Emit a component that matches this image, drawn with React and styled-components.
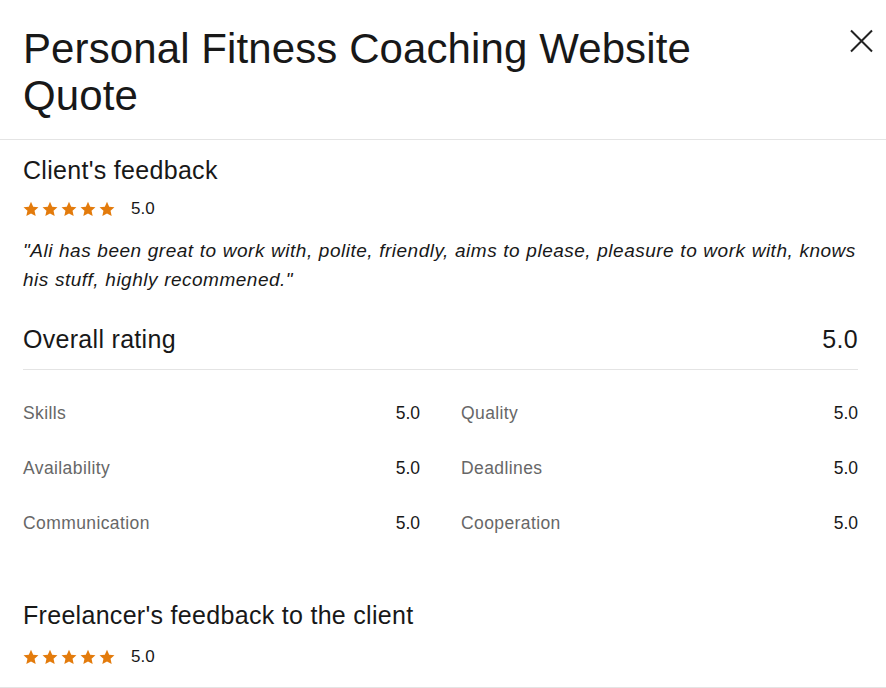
import React from "react";
import styled, { createGlobalStyle } from "styled-components";

const GlobalStyle = createGlobalStyle`
  html, body {
    margin: 0;
    padding: 0;
    background: #fff;
  }
  body {
    font-family: "Liberation Sans", Arial, sans-serif;
    color: #181818;
  }
`;

const Modal = styled.div`
  width: 886px;
  background: #fff;
`;

const Header = styled.div`
  display: flex;
  justify-content: space-between;
  align-items: flex-start;
  padding: 25px 12px 20px 23px;
  border-bottom: 1px solid #e4e4e4;
`;

const Title = styled.h1`
  margin: 0;
  max-width: 720px;
  font-size: 42px;
  line-height: 47px;
  font-weight: 400;
  letter-spacing: 0.1px;
`;

const CloseButton = styled.button`
  width: 26px;
  height: 26px;
  margin-top: 3px;
  padding: 0;
  border: none;
  background: none;
  cursor: pointer;
  display: flex;
  align-items: center;
  justify-content: center;
`;

const Body = styled.div`
  padding: 15px 28px 0 23px;
`;

const Heading = styled.h2`
  margin: 0;
  font-size: 25px;
  line-height: 30px;
  font-weight: 400;
  letter-spacing: 0.3px;
`;

const StarRow = styled.div`
  display: flex;
  align-items: center;
  height: 20px;
  margin-top: ${p => p.$gap || 14}px;
`;

const Stars = styled.div`
  display: flex;
  gap: 3px;
  margin-right: 16px;
`;

const Score = styled.span`
  font-size: 17px;
  line-height: 20px;
`;

const Quote = styled.p`
  margin: 17px 0 0;
  font-size: 19px;
  line-height: 29px;
  font-style: italic;
  letter-spacing: 0.5px;
  word-spacing: 0.4px;
`;

const OverallRow = styled.div`
  display: flex;
  justify-content: space-between;
  align-items: center;
  margin-top: 30px;
  padding-bottom: 15px;
  border-bottom: 1px solid #e4e4e4;
`;

const Grid = styled.div`
  display: grid;
  grid-template-columns: 1fr 1fr;
  column-gap: 41px;
  row-gap: 31px;
  margin-top: 31px;
`;

const MetricRow = styled.div`
  display: flex;
  justify-content: space-between;
  font-size: 17.5px;
  line-height: 24px;
`;

const MetricLabel = styled.span`
  color: #676767;
  letter-spacing: 0.4px;
`;

const MetricValue = styled.span`
  color: #181818;
`;

const FreelancerBlock = styled.div`
  margin: 65px -28px 0 -23px;
  padding: 0 0 20px 23px;
  border-bottom: 1px solid #e4e4e4;
`;

const Star = () => (
  <svg width="16" height="16" viewBox="0 0 24 24">
    <path
      fill="#e37b0c"
      d="M12 1.2l3.3 7.3 7.9.8-5.9 5.4 1.7 7.9L12 18.6l-7 4 1.7-7.9L.8 9.3l7.9-.8z"
    />
  </svg>
);

const Rating = ({ value, gap }) => (
  <StarRow $gap={gap}>
    <Stars>
      {[0, 1, 2, 3, 4].map(i => (
        <Star key={i} />
      ))}
    </Stars>
    <Score>{value}</Score>
  </StarRow>
);

const metrics = [
  ["Skills", "5.0"],
  ["Quality", "5.0"],
  ["Availability", "5.0"],
  ["Deadlines", "5.0"],
  ["Communication", "5.0"],
  ["Cooperation", "5.0"],
];

export default function App() {
  return (
    <Modal>
      <GlobalStyle />
      <Header>
        <Title>Personal Fitness Coaching Website Quote</Title>
        <CloseButton aria-label="Close">
          <svg width="24" height="24" viewBox="0 0 24 24">
            <path d="M2 1.5l21 21M23 1.5l-21 21" stroke="#222" strokeWidth="2" fill="none" />
          </svg>
        </CloseButton>
      </Header>
      <Body>
        <section>
          <Heading>Client's feedback</Heading>
          <Rating value="5.0" />
          <Quote>
            "Ali has been great to work with, polite, friendly, aims to please, pleasure to work
            with, knows his stuff, highly recommened."
          </Quote>
        </section>
        <OverallRow>
          <Heading>Overall rating</Heading>
          <Heading>5.0</Heading>
        </OverallRow>
        <Grid>
          {metrics.map(([label, value]) => (
            <MetricRow key={label}>
              <MetricLabel>{label}</MetricLabel>
              <MetricValue>{value}</MetricValue>
            </MetricRow>
          ))}
        </Grid>
        <FreelancerBlock>
          <Heading>Freelancer's feedback to the client</Heading>
          <Rating value="5.0" gap={17} />
        </FreelancerBlock>
      </Body>
    </Modal>
  );
}
